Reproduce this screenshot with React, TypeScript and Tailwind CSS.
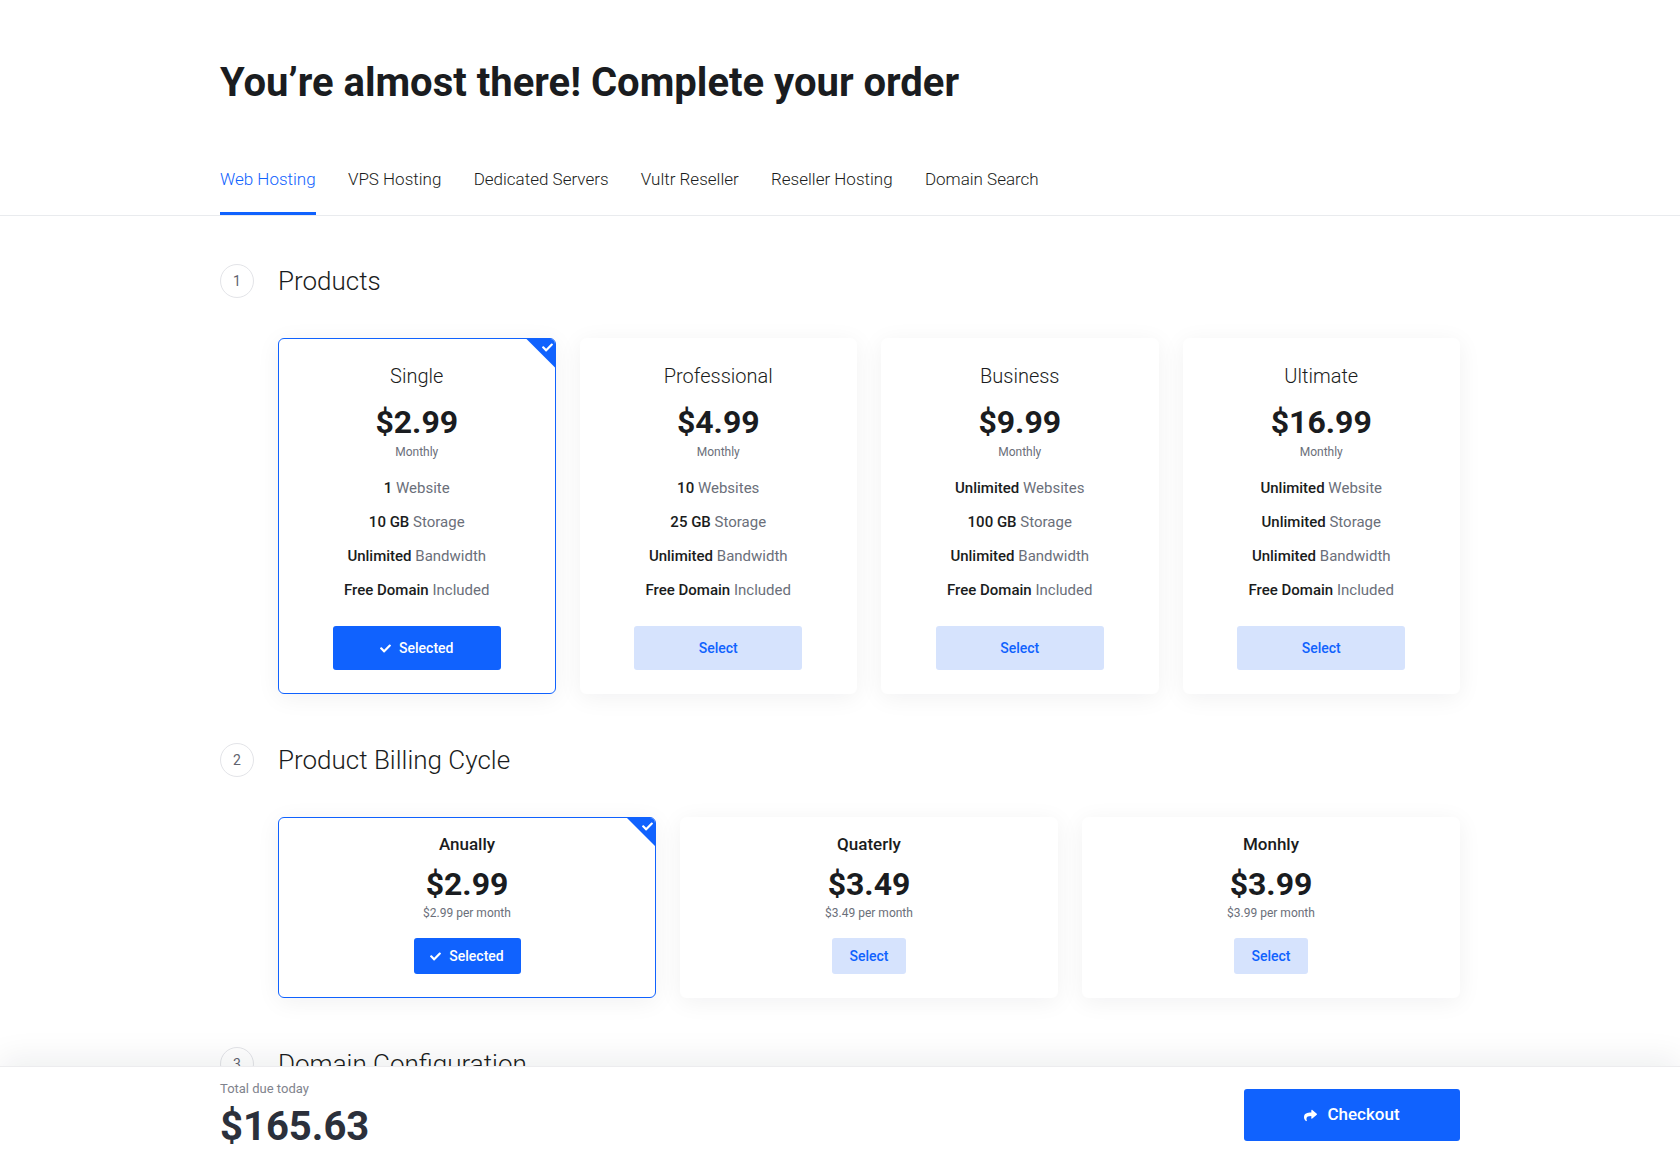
import { FaCheck, FaShare } from "react-icons/fa"

const tabs = ["Web Hosting", "VPS Hosting", "Dedicated Servers", "Vultr Reseller", "Reseller Hosting", "Domain Search"]

const products = [
  {
    name: "Single",
    price: "$2.99",
    selected: true,
    features: [["1", "Website"], ["10 GB", "Storage"], ["Unlimited", "Bandwidth"], ["Free Domain", "Included"]],
  },
  {
    name: "Professional",
    price: "$4.99",
    features: [["10", "Websites"], ["25 GB", "Storage"], ["Unlimited", "Bandwidth"], ["Free Domain", "Included"]],
  },
  {
    name: "Business",
    price: "$9.99",
    features: [["Unlimited", "Websites"], ["100 GB", "Storage"], ["Unlimited", "Bandwidth"], ["Free Domain", "Included"]],
  },
  {
    name: "Ultimate",
    price: "$16.99",
    features: [["Unlimited", "Website"], ["Unlimited", "Storage"], ["Unlimited", "Bandwidth"], ["Free Domain", "Included"]],
  },
]

const cycles = [
  { name: "Anually", price: "$2.99", note: "$2.99 per month", selected: true },
  { name: "Quaterly", price: "$3.49", note: "$3.49 per month" },
  { name: "Monhly", price: "$3.99", note: "$3.99 per month" },
]

function StepHeader({ step, title }: { step: number; title: string }) {
  return (
    <div className="flex h-[34px] items-center">
      <div className="flex h-[34px] w-[34px] shrink-0 items-center justify-center rounded-full border border-[#e3e4e8] text-[14px] text-[#5f636e]">
        {step}
      </div>
      <h2 className="ml-[24px] text-[26px] leading-[34px] font-light text-[#1a1c20]">{title}</h2>
    </div>
  )
}

function Corner() {
  return (
    <div className="absolute top-[-1px] right-[-1px] h-[30px] w-[30px] bg-[#1062fe] [clip-path:polygon(0_0,100%_0,100%_100%)]">
      <FaCheck className="absolute top-[4px] right-[3px] text-white" size={11} />
    </div>
  )
}

function Card({ selected, className, children }: { selected?: boolean; className: string; children: React.ReactNode }) {
  return (
    <div
      className={`relative overflow-hidden rounded-[6px] border bg-white text-center shadow-[0_4px_24px_rgba(20,25,40,0.06)] ${
        selected ? "border-[#1062fe]" : "border-white"
      } ${className}`}
    >
      {selected && <Corner />}
      {children}
    </div>
  )
}

function SelectButton({ selected, className }: { selected?: boolean; className: string }) {
  return (
    <button
      className={`flex items-center justify-center rounded-[3px] text-[14px] font-medium ${
        selected ? "bg-[#1062fe] text-white" : "bg-[#d6e3fd] text-[#1062fe]"
      } ${className}`}
    >
      {selected && <FaCheck className="mr-[8px]" size={11} />}
      {selected ? "Selected" : "Select"}
    </button>
  )
}

export default function App() {
  return (
    <div className="flex h-screen flex-col overflow-hidden bg-white font-['Roboto',sans-serif] text-[#1a1c20] antialiased">
      <main className="min-h-0 flex-1 overflow-hidden">
        <div className="mx-[220px] pt-[59px]">
          <h1 className="text-[40px] leading-[48px] font-bold">You’re almost there! Complete your order</h1>
        </div>

        <nav className="mt-[60px] border-b border-[#e9ebee]">
          <div className="mx-[220px] flex gap-[32.3px]">
            {tabs.map((tab, i) => (
              <a
                key={tab}
                className={`border-b-[3px] pb-[21px] text-[17px] leading-[24px] font-light ${
                  i === 0 ? "border-[#1062fe] text-[#1062fe]" : "border-transparent text-[#1a1c20]"
                }`}
              >
                {tab}
              </a>
            ))}
          </div>
        </nav>

        <div className="mx-[220px] pt-[48px]">
          <StepHeader step={1} title="Products" />
          <div className="mt-[40px] ml-[58px] grid grid-cols-4 gap-[24px]">
            {products.map((p) => (
              <Card key={p.name} selected={p.selected} className="flex flex-col items-center pt-[23px] pb-[23px]">
                <div className="text-[20px] leading-[28px] font-light">{p.name}</div>
                <div className="mt-[12px] text-[32px] leading-[40px] font-bold">{p.price}</div>
                <div className="mt-[2px] text-[12px] leading-[16px] text-[#6b6f7a]">Monthly</div>
                <ul className="mt-[17px] flex flex-col gap-[12px] text-[15px] leading-[22px]">
                  {p.features.map(([strong, rest]) => (
                    <li key={rest} className="text-[#6b6f7a]">
                      <span className="font-medium text-[#1a1c20]">{strong}</span> {rest}
                    </li>
                  ))}
                </ul>
                <SelectButton selected={p.selected} className="mt-[25px] h-[44px] w-[168px]" />
              </Card>
            ))}
          </div>

          <div className="mt-[49px]">
            <StepHeader step={2} title="Product Billing Cycle" />
          </div>
          <div className="mt-[40px] ml-[58px] grid grid-cols-3 gap-[24px]">
            {cycles.map((c) => (
              <Card key={c.name} selected={c.selected} className="flex flex-col items-center pt-[14px] pb-[23px]">
                <div className="text-[17px] leading-[24px] font-medium">{c.name}</div>
                <div className="mt-[8px] text-[32px] leading-[40px] font-bold">{c.price}</div>
                <div className="mt-px text-[12px] leading-[16px] text-[#6b6f7a]">{c.note}</div>
                <SelectButton
                  selected={c.selected}
                  className={`mt-[17px] h-[36px] ${c.selected ? "w-[107px]" : "w-[74px]"}`}
                />
              </Card>
            ))}
          </div>

          <div className="mt-[49px]">
            <StepHeader step={3} title="Domain Configuration" />
          </div>
        </div>
      </main>

      <footer className="relative flex h-[98px] shrink-0 border-t border-[#ececee] bg-white shadow-[0_-8px_30px_rgba(20,25,40,0.07)]">
        <div className="mx-[220px] flex flex-1 items-start justify-between">
          <div className="pt-[13px]">
            <div className="text-[13px] leading-[18px] text-[#7f838d]">Total due today</div>
            <div className="mt-[5px] text-[40px] leading-[48px] font-bold text-[#2b303b]">$165.63</div>
          </div>
          <button className="mt-[22px] flex h-[52px] w-[216px] items-center justify-center rounded-[3px] bg-[#1062fe] text-[17px] font-medium text-white">
            <FaShare className="mr-[10px]" size={13} />
            Checkout
          </button>
        </div>
      </footer>
    </div>
  )
}
